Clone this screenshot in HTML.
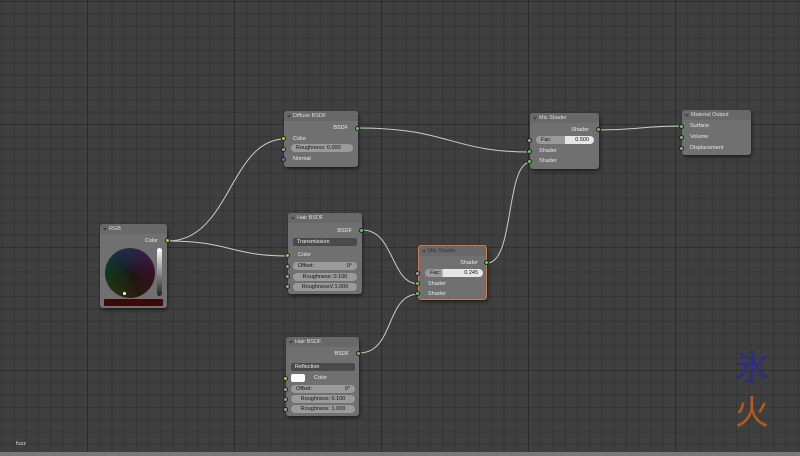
<!DOCTYPE html>
<html><head><meta charset="utf-8"><style>
*{margin:0;padding:0;box-sizing:border-box}
body{width:800px;height:456px;overflow:hidden;position:relative;font-family:"Liberation Sans",sans-serif;font-size:6px;color:#ddd;
background-color:#3f3f3f;
background-image:linear-gradient(90deg,rgba(0,0,0,.18) 1px,transparent 1px),linear-gradient(0deg,rgba(0,0,0,.12) 1px,transparent 1px),linear-gradient(90deg,rgba(0,0,0,.14) 1px,transparent 1px),linear-gradient(0deg,rgba(0,0,0,.14) 1px,transparent 1px);
background-size:147px 147px,123px 123px,12.25px 12.25px,12.3px 12.3px;background-position:87px 0,0 2px,87px 0,0 2px}
.n{position:absolute;background:#707070;border-radius:3px;box-shadow:1px 2px 3px rgba(0,0,0,.5)}
.h{height:10px;background:#686868;border-radius:3px 3px 0 0;padding-left:9px;line-height:10px;color:#ddd;font-size:5.5px;position:relative}
.h:before{content:"";position:absolute;left:3px;top:4px;border-left:2px solid transparent;border-right:2px solid transparent;border-top:3px solid #444}
.t{position:absolute;font-size:5.5px;color:#e8e8e8;white-space:nowrap}
.s{position:absolute;width:5px;height:5px;border-radius:50%;border:.5px solid #222}
.g{background:#63c763}.y{background:#c7c729}.w{background:#a1a1a1}.b{background:#6363c7}
.f{position:absolute;height:8px;border-radius:4px;background:#9a9a9a;font-size:5.5px;color:#111;line-height:8px;padding:0 5px}
.d{position:absolute;height:8px;border-radius:2px;background:#4a4a4a;color:#eee;font-size:5.5px;line-height:8px;padding-left:4px}
</style></head><body>
<svg width="800" height="456" style="position:absolute;left:0;top:0" fill="none" stroke="#ccc" stroke-width="1">
<path d="M168 241 C230 241,230 139,285 139"/>
<path d="M168 241 C230 241,230 256,289 256"/>
<path d="M358 128 C450 128,450 152,531 152"/>
<path d="M362 230 C395 230,390 284,419 284"/>
<path d="M359 353 C395 353,385 294,419 294"/>
<path d="M487 263 C515 263,505 162,531 162"/>
<path d="M599 130 C640 130,640 126,683 126"/>
</svg>

<div class="n" style="left:284px;top:111px;width:74px;height:56px">
<div class="h">Diffuse BSDF</div>
<div class="t" style="right:10px;top:14px">BSDF</div>
<div class="t" style="left:9px;top:25px">Color</div>
<div class="f" style="left:7px;top:33px;width:62px">Roughness: 0.000</div>
<div class="t" style="left:9px;top:45px">Normal</div>
</div>
<div class="s g" style="left:355px;top:126px"></div>
<div class="s y" style="left:281px;top:136px"></div>
<div class="s w" style="left:281px;top:147px"></div>
<div class="s b" style="left:281px;top:157px"></div>

<div class="n" style="left:100px;top:224px;width:67px;height:84px">
<div class="h">RGB</div>
<div class="t" style="right:9px;top:14px">Color</div>
<div style="position:absolute;left:5px;top:24px;width:50px;height:50px;border-radius:50%;background:conic-gradient(from 0deg,#2a2a50,#3a1a45,#3a1020,#2a1a0a,#2a3010,#153a15,#15353a,#2a2a50);"></div>
<div style="position:absolute;left:5px;top:24px;width:50px;height:50px;border-radius:50%;background:radial-gradient(circle,rgba(20,20,20,.7),rgba(20,20,20,0) 75%)"></div>
<div style="position:absolute;left:23px;top:68px;width:3px;height:3px;border-radius:50%;background:#fff"></div>
<div style="position:absolute;left:57px;top:24px;width:5px;height:48px;border-radius:3px;background:linear-gradient(#fff,#222)"></div>
<div style="position:absolute;left:4px;top:75px;width:59px;height:7px;background:#3a0a0a;border-radius:1px"></div>
</div>
<div class="s y" style="left:165px;top:238px"></div>

<div class="n" style="left:288px;top:213px;width:74px;height:81px">
<div class="h">Hair BSDF</div>
<div class="t" style="right:10px;top:15px">BSDF</div>
<div class="d" style="left:5px;top:25px;width:64px">Transmission</div>
<div class="t" style="left:10px;top:39px">Color</div>
<div class="f" style="left:5px;top:49px;width:64px">Offset:<span style="float:right">0°</span></div>
<div class="f" style="left:5px;top:60px;width:64px;text-align:center">Roughness: 0.100</div>
<div class="f" style="left:5px;top:70px;width:64px;text-align:center">RoughnessV:1.000</div>
</div>
<div class="s g" style="left:359px;top:228px"></div>
<div class="s y" style="left:285px;top:253px"></div>
<div class="s w" style="left:285px;top:264px"></div>
<div class="s w" style="left:285px;top:274px"></div>
<div class="s w" style="left:285px;top:284px"></div>

<div class="n" style="left:418px;top:245px;width:69px;height:55px;border:1px solid #c87a50">
<div class="h" style="color:#333">Mix Shader</div>
<div class="t" style="right:8px;top:14px">Shader</div>
<div class="f" style="left:6px;top:23px;width:58px;background:linear-gradient(90deg,#9a9a9a 30%,#e6e6e6 30%)">Fac:<span style="float:right">0.245</span></div>
<div class="t" style="left:9px;top:35px">Shader</div>
<div class="t" style="left:9px;top:45px">Shader</div>
</div>
<div class="s g" style="left:484px;top:260px"></div>
<div class="s w" style="left:415px;top:271px"></div>
<div class="s g" style="left:415px;top:281px"></div>
<div class="s g" style="left:415px;top:291px"></div>

<div class="n" style="left:530px;top:113px;width:69px;height:56px">
<div class="h">Mix Shader</div>
<div class="t" style="right:10px;top:14px">Shader</div>
<div class="f" style="left:6px;top:23px;width:58px;background:linear-gradient(90deg,#9a9a9a 50%,#e6e6e6 50%)">Fac:<span style="float:right">0.500</span></div>
<div class="t" style="left:9px;top:35px">Shader</div>
<div class="t" style="left:9px;top:45px">Shader</div>
</div>
<div class="s g" style="left:596px;top:127px"></div>
<div class="s w" style="left:527px;top:138px"></div>
<div class="s g" style="left:527px;top:149px"></div>
<div class="s g" style="left:527px;top:159px"></div>

<div class="n" style="left:682px;top:110px;width:69px;height:45px">
<div class="h">Material Output</div>
<div class="t" style="left:8px;top:13px">Surface</div>
<div class="t" style="left:8px;top:24px">Volume</div>
<div class="t" style="left:8px;top:35px">Displacement</div>
</div>
<div class="s g" style="left:679px;top:124px"></div>
<div class="s g" style="left:679px;top:135px"></div>
<div class="s w" style="left:679px;top:146px"></div>

<div class="n" style="left:286px;top:337px;width:73px;height:79px">
<div class="h">Hair BSDF</div>
<div class="t" style="right:10px;top:14px">BSDF</div>
<div class="d" style="left:5px;top:26px;width:64px">Reflection</div>
<div style="position:absolute;left:5px;top:37px;width:14px;height:8px;background:#fafafa;border-radius:2px"></div>
<div class="t" style="left:28px;top:38px">Color</div>
<div class="f" style="left:5px;top:48px;width:64px">Offset:<span style="float:right">0°</span></div>
<div class="f" style="left:5px;top:58px;width:64px;text-align:center">Roughness: 0.100</div>
<div class="f" style="left:5px;top:68px;width:64px;text-align:center">Roughness: 1.000</div>
</div>
<div class="s g" style="left:356px;top:351px"></div>
<div class="s y" style="left:283px;top:376px"></div>
<div class="s w" style="left:283px;top:387px"></div>
<div class="s w" style="left:283px;top:397px"></div>
<div class="s w" style="left:283px;top:407px"></div>

<div style="position:absolute;left:735px;top:345px;font-size:34px;line-height:40px;color:#2a2a90;font-family:'Noto Sans CJK JP',sans-serif">氷</div>
<div style="position:absolute;left:735px;top:390px;font-size:34px;line-height:40px;color:#b05a20;font-family:'Noto Sans CJK JP',sans-serif">火</div>
<div class="t" style="left:16px;top:441px;color:#ddd">fuzz</div>
<div style="position:absolute;left:0;top:452px;width:800px;height:4px;background:#777"></div>
</body></html>
